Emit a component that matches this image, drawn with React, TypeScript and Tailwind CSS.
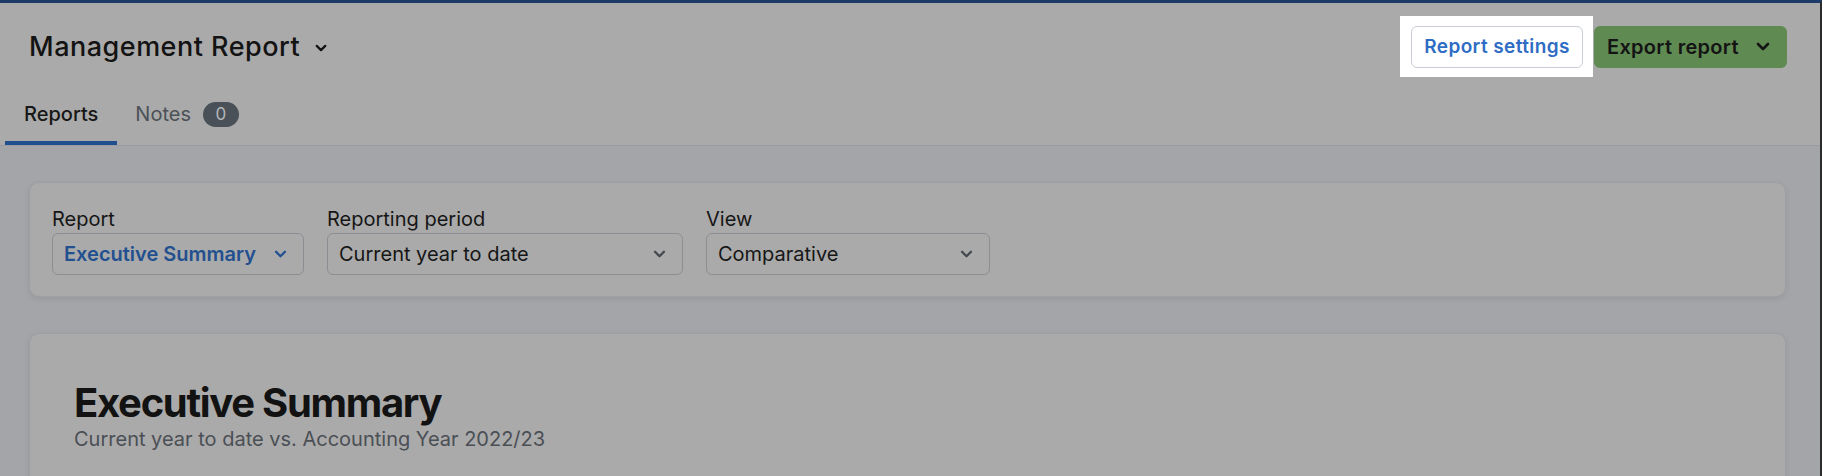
import React from "react";

const Chevron = ({ className }: { className?: string }) => (
  <svg viewBox="0 0 14 9" className={className} fill="none" stroke="currentColor" strokeWidth={2.6} strokeLinecap="round" strokeLinejoin="round">
    <path d="M2 2l5 5 5-5" />
  </svg>
);

function Select({ label, value, width, blue }: { label: string; value: string; width: string; blue?: boolean }) {
  return (
    <div className="flex flex-col">
      <span className="text-[20px] leading-[28px] text-[#161616]">{label}</span>
      <div className={`${width} h-[42px] flex items-center justify-between pl-[11px] pr-[16px] rounded-[6px] border border-[#8b8e92]`}>
        <span className={blue ? "text-[20px] font-semibold text-[#23508f]" : "text-[20px] text-[#161616]"}>{value}</span>
        <Chevron className={blue ? "w-[13px] h-[8px] text-[#23508f]" : "w-[13px] h-[8px] text-[#44494f]"} />
      </div>
    </div>
  );
}

export default function App() {
  return (
    <div className="w-[1822px] h-[476px] overflow-hidden flex flex-col border-t-[3px] border-t-[#1d3a68] border-r-2 border-r-[#2b2b2b] bg-[#a3a5a9] font-['Inter',sans-serif]">
      <header className="bg-[#aaaaaa] border-b border-[#9a9b9e]">
        <div className="h-[87px] flex items-center justify-between pl-[29px] pr-[33px]">
          <div className="flex items-center gap-[15px] pt-[2px]">
            <h1 className="text-[27px] font-medium text-[#131313] tracking-[0.5px]">Management Report</h1>
            <Chevron className="w-[12px] h-[8px] text-[#131313]" />
          </div>
          <div className="flex items-center">
            <div className="bg-white pl-[11px] pr-[10px] pt-[10px] pb-[9px]">
              <button className="h-[42px] w-[172px] rounded-[6px] border border-[#c9ced6] bg-white text-[19px] font-semibold tracking-[0.4px] text-[#2f6dc5]">
                Report settings
              </button>
            </div>
            <button className="ml-px h-[42px] w-[193px] rounded-[6px] bg-[#5f8a52] flex items-center justify-between pl-[13px] pr-[17px] text-[20px] font-semibold tracking-[0.3px] text-[#141414]">
              Export report
              <Chevron className="w-[14px] h-[9px] text-[#141414]" />
            </button>
          </div>
        </div>
        <nav className="h-[55px] flex pl-[5px]">
          <div className="h-full px-[19px] pt-[10px] border-b-4 border-[#1f4f8f]">
            <span className="text-[20px] leading-[28px] font-medium text-[#171717]">Reports</span>
          </div>
          <div className="h-full px-[18px] pt-[10px] flex items-start gap-[12px]">
            <span className="text-[20px] leading-[28px] text-[#4b5157]">Notes</span>
            <span className="mt-[2px] h-[25px] w-[36px] rounded-full bg-[#4a5058] flex items-center justify-center text-[17px] text-[#b4b6b8]">0</span>
          </div>
        </nav>
      </header>
      <main className="flex flex-col gap-[36px] pt-[36px] pl-[29px] pr-[34px]">
        <section className="rounded-[10px] border border-[#9c9fa3] bg-[#aaaaaa] shadow-[0_2px_6px_rgba(0,0,0,0.08)] px-[22px] pt-[22px] pb-[21px] flex gap-[23px]">
          <Select label="Report" value="Executive Summary" width="w-[252px]" blue />
          <Select label="Reporting period" value="Current year to date" width="w-[356px]" />
          <Select label="View" value="Comparative" width="w-[284px]" />
        </section>
        <section className="h-[200px] rounded-t-[10px] border border-[#9c9fa3] bg-[#aaaaaa] shadow-[0_2px_6px_rgba(0,0,0,0.08)] pl-[44px] pt-[45px]">
          <h2 className="text-[40px] leading-[48px] font-bold text-[#121212] tracking-[-1.3px]">Executive Summary</h2>
          <p className="text-[20px] leading-[24px] text-[#4a4f55]">Current year to date vs. Accounting Year 2022/23</p>
        </section>
      </main>
    </div>
  );
}
